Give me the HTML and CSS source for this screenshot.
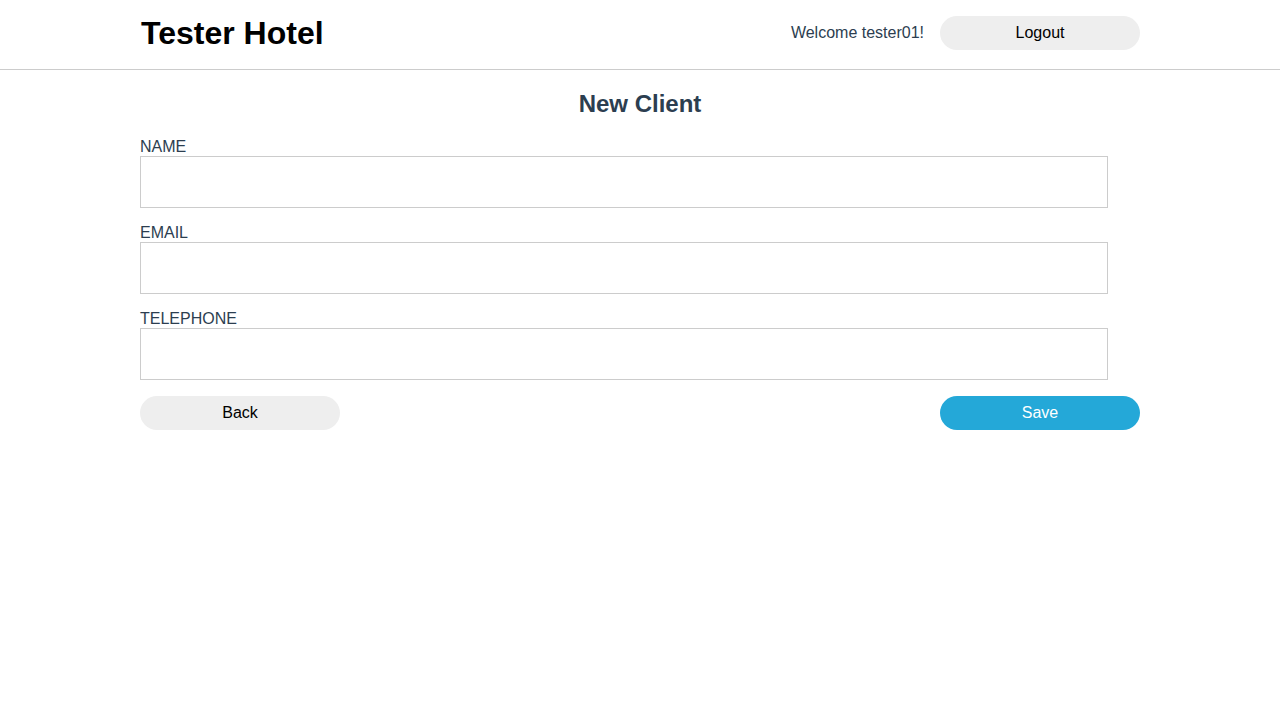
FILE: index.html
```html
<!DOCTYPE html>
<html lang="en">
<head>
<meta charset="utf-8">
<title>Tester Hotel</title>
<link rel="stylesheet" href="styles.css">
</head>
<body>
<header class="topbar">
  <div class="topbar-inner">
    <h1 class="brand">Tester Hotel</h1>
    <div class="user">
      <span class="welcome">Welcome tester01!</span>
      <button class="btn">Logout</button>
    </div>
  </div>
</header>
<main class="content">
  <h2 class="page-title">New Client</h2>
  <form class="form">
    <div class="field">
      <label class="label">NAME</label>
      <input class="input" type="text">
    </div>
    <div class="field">
      <label class="label">EMAIL</label>
      <input class="input" type="text">
    </div>
    <div class="field">
      <label class="label">TELEPHONE</label>
      <input class="input" type="text">
    </div>
    <div class="actions">
      <button type="button" class="btn">Back</button>
      <button type="button" class="btn btn-blue">Save</button>
    </div>
  </form>
</main>
</body>
</html>
```
FILE: styles.css
```css
* { box-sizing: border-box; }
body {
  margin: 0;
  font-family: "Liberation Sans", Arial, sans-serif;
  color: #2c3e50;
  background: #fff;
}
.topbar {
  border-bottom: 1px solid #ccc;
}
.topbar-inner {
  width: 1000px;
  margin: 0 auto;
  height: 69px;
  padding-bottom: 4px;
  display: flex;
  align-items: center;
  justify-content: space-between;
}
.brand {
  margin: 0 0 0 1px;
  font-size: 32px;
  font-weight: bold;
  color: #000;
  line-height: 1;
}
.user {
  display: flex;
  align-items: center;
  gap: 16px;
}
.welcome {
  font-size: 16px;
  color: #2c3e50;
}
.btn {
  width: 200px;
  height: 34px;
  border: none;
  border-radius: 17px;
  background: #eeeeee;
  color: #000;
  font-family: "Liberation Sans", Arial, sans-serif;
  font-size: 16px;
  padding: 0;
}
.btn-blue {
  background: #24a8d8;
  color: #fff;
}
.content {
  width: 1000px;
  margin: 0 auto;
  padding-top: 20px;
}
.page-title {
  margin: 0 0 21px;
  text-align: center;
  font-size: 24px;
  line-height: 27px;
  font-weight: bold;
  color: #2c3e50;
}
.form {
  display: flex;
  flex-direction: column;
  gap: 16px;
}
.field {
  display: flex;
  flex-direction: column;
}
.label {
  font-size: 16px;
  line-height: 18px;
  color: #2c3e50;
}
.input {
  width: 968px;
  height: 52px;
  border: 1px solid #ccc;
  margin: 0;
  font-size: 16px;
}
.actions {
  display: flex;
  justify-content: space-between;
}
```
